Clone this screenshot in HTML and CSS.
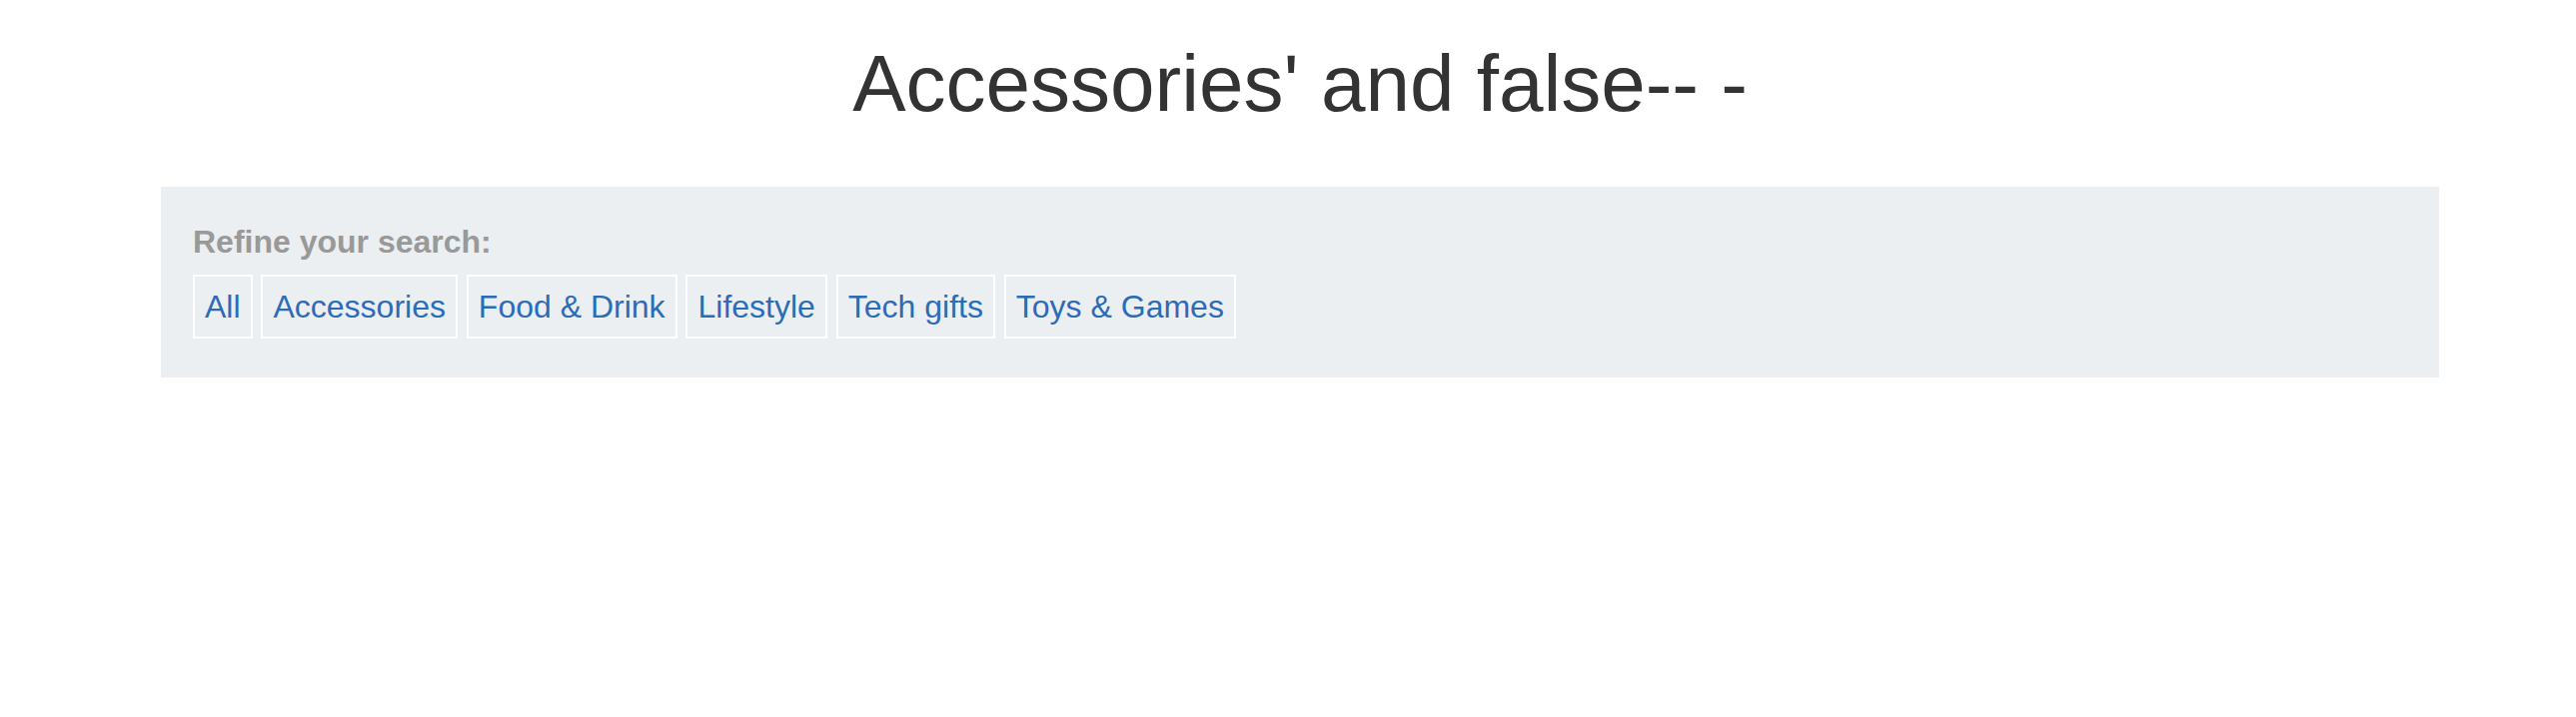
FILE: index.html
```html
<!DOCTYPE html>
<html lang="en">
<head>
<meta charset="utf-8">
<title>Accessories' and false-- -</title>
<link rel="stylesheet" href="styles.css">
</head>
<body>
<div class="container">
  <h1 class="title">Accessories' and false-- -</h1>
  <div class="refine">
    <div class="refine-label">Refine your search:</div>
    <div class="refine-list">
      <a class="tag" href="#">All</a>
      <a class="tag" href="#">Accessories</a>
      <a class="tag" href="#">Food &amp; Drink</a>
      <a class="tag" href="#">Lifestyle</a>
      <a class="tag" href="#">Tech gifts</a>
      <a class="tag" href="#">Toys &amp; Games</a>
    </div>
  </div>
</div>
</body>
</html>
```
FILE: styles.css
```css
html, body {
  margin: 0;
  padding: 0;
  background: #ffffff;
}
body {
  font-family: "Liberation Sans", Arial, sans-serif;
  color: #333333;
}
.container {
  margin-left: 161px;
  width: 2280px;
}
.title {
  margin: 0 0 57px 0;
  padding-top: 38px;
  font-size: 80px;
  font-weight: normal;
  line-height: 92px;
  text-align: center;
  color: #333333;
}
.refine {
  background: #eceff2;
  padding: 37px 32px 39px 32px;
}
.refine-label {
  font-size: 32px;
  font-weight: bold;
  line-height: 37px;
  color: #999999;
  margin-bottom: 14px;
}
.refine-list {
  font-size: 32px;
  line-height: 36px;
}
.tag {
  display: inline-block;
  padding: 12px 10px;
  border: 2px solid #ffffff;
  color: #2b6cb8;
  text-decoration: none;
  vertical-align: top;
}
```
